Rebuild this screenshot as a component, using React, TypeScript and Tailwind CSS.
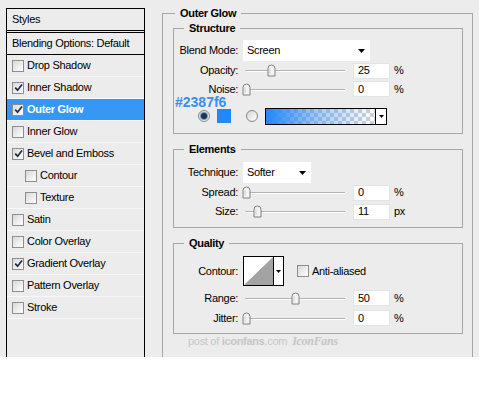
import React from "react";

const layers = [
  { label: "Drop Shadow" },
  { label: "Inner Shadow", checked: true },
  { label: "Outer Glow", checked: true, active: true },
  { label: "Inner Glow" },
  { label: "Bevel and Emboss", checked: true },
  { label: "Contour", indent: true },
  { label: "Texture", indent: true },
  { label: "Satin" },
  { label: "Color Overlay" },
  { label: "Gradient Overlay", checked: true },
  { label: "Pattern Overlay" },
  { label: "Stroke" },
];

function CheckBox({ checked }: { checked?: boolean }) {
  return (
    <span className="flex h-[12px] w-[12px] shrink-0 items-center justify-center border border-[#8e8e8e] bg-linear-to-br from-[#d9d9d9] to-white">
      {checked && (
        <svg width="9" height="9" viewBox="0 0 9 9">
          <path d="M1.2 4.6 L3.6 7.2 L8 1.4" stroke="#1d2f4a" strokeWidth="1.7" fill="none" />
        </svg>
      )}
    </span>
  );
}

function Radio({ checked }: { checked?: boolean }) {
  return (
    <span className="flex h-[12px] w-[12px] shrink-0 items-center justify-center rounded-full border border-[#858585] bg-linear-to-br from-[#d6d6d6] to-white">
      {checked && <span className="h-[6px] w-[6px] rounded-full bg-[#1c3550] shadow-[0_0_0_1px_#6f9cc8]" />}
    </span>
  );
}

function Arrow() {
  return (
    <svg width="7" height="4" viewBox="0 0 7 4">
      <path d="M0 0 H7 L3.5 4 Z" fill="#000" />
    </svg>
  );
}

function Slider({ pos }: { pos: number }) {
  return (
    <div className="relative h-full w-[102px]">
      <div className="absolute left-[2px] right-0 top-[9px] h-px bg-[#b4b4b4]" />
      <div className="absolute left-[2px] right-0 top-[10px] h-px bg-white" />
      <svg
        className="absolute top-[3px]"
        style={{ left: pos - 4 }}
        width="9"
        height="13"
        viewBox="0 0 9 13"
      >
        <path d="M1 4.5 Q1 1 4.5 1 Q8 1 8 4.5 V12 H1 Z" fill="#f3f3f3" stroke="#7f7f7f" />
        <path d="M3 4 V10" stroke="#d0d0d0" />
      </svg>
    </div>
  );
}

function SliderRow({ label, value, unit, pos, h = "h-[19px]" }: { label: string; value: string; unit: string; pos: number; h?: string }) {
  return (
    <div className={`flex items-center ${h}`}>
      <span className="w-[64px] text-right">{label}</span>
      <div className="ml-[5px] h-[19px]">
        <Slider pos={pos} />
      </div>
      <div className="ml-[8px] flex h-[16px] w-[37px] items-center border border-[#e4e4e4] bg-white pl-[4px]">{value}</div>
      <span className="ml-[4px]">{unit}</span>
    </div>
  );
}

function Select({ value, w }: { value: string; w: string }) {
  return (
    <div className={`flex h-[21px] items-center justify-between bg-white pl-[4px] pr-[5px] ${w}`}>
      <span>{value}</span>
      <Arrow />
    </div>
  );
}

export default function App() {
  return (
    <div className="h-[413px] w-[479px] bg-white font-['Liberation_Sans',Arial,sans-serif] text-[11px] leading-[13px] tracking-[-0.3px] text-black">
      <div className="flex h-[357px] overflow-hidden bg-[#ececec]">
        {/* styles list */}
        <div className="ml-[6px] mt-[8px] flex h-[360px] w-[139px] flex-col border border-b-0 border-black">
          <div className="flex h-[24px] items-center border-b-[3px] border-double border-black pl-[5px]">Styles</div>
          <div className="flex h-[22px] items-center border-b border-black pl-[5px]">Blending Options: Default</div>
          {layers.map((l) => (
            <div
              key={l.label}
              className={`flex h-[22px] items-center gap-[2px] border-b border-[#f8f8f8] ${l.indent ? "pl-[18px]" : "pl-[5px]"} ${l.active ? "bg-[#3797f4] font-bold text-white" : ""}`}
            >
              <CheckBox checked={l.checked} />
              <span className="ml-[1px]">{l.label}</span>
            </div>
          ))}
        </div>

        {/* outer glow settings */}
        <fieldset className="ml-[17px] mt-[6px] h-[400px] w-[311px] border border-[#a6a6a6]">
          <legend className="ml-[12px] px-[5px] font-bold leading-[14px]">Outer Glow</legend>

          <fieldset className="relative ml-[10px] mt-[1px] w-[290px] border border-[#a6a6a6] pb-[9px] pt-[5px]">
            <legend className="ml-[10px] px-[5px] font-bold leading-[14px]">Structure</legend>
            <div className="flex h-[21px] items-center">
              <span className="w-[64px] text-right">Blend Mode:</span>
              <div className="ml-[5px]">
                <Select value="Screen" w="w-[127px]" />
              </div>
            </div>
            <SliderRow label="Opacity:" value="25" unit="%" pos={28} />
            <SliderRow label="Noise:" value="0" unit="%" h="h-[18px]" pos={3} />
            <div className="relative mt-[10px] flex h-[16px] items-center">
              <span className="absolute -top-[11px] left-[1px] text-[14px] font-bold leading-[10px] tracking-normal text-[#3b8fe6]">#2387f6</span>
              <div className="ml-[24px]">
                <Radio checked />
              </div>
              <span className="ml-[7px] h-[14px] w-[14px] bg-[#2387f6]" />
              <div className="ml-[15px]">
                <Radio />
              </div>
              <div className="ml-[7px] flex h-[17px] w-[122px] border border-black">
                <div className="relative flex-1 bg-[repeating-conic-gradient(#d2d2d2_0%_25%,#ffffff_0%_50%)] bg-[length:8px_8px]">
                  <div className="absolute inset-0 bg-linear-to-r from-[#2387f6] via-[#2387f6]/40 to-transparent" />
                </div>
                <div className="flex w-[11px] items-center justify-center border-l border-black bg-white">
                  <svg width="5" height="3" viewBox="0 0 5 3">
                    <path d="M0 0 H5 L2.5 3 Z" fill="#000" />
                  </svg>
                </div>
              </div>
            </div>
          </fieldset>

          <fieldset className="ml-[10px] mt-[8px] w-[290px] border border-[#a6a6a6] pb-[6px] pt-[6px]">
            <legend className="ml-[10px] px-[5px] font-bold leading-[14px]">Elements</legend>
            <div className="flex h-[21px] items-center">
              <span className="w-[64px] text-right">Technique:</span>
              <div className="ml-[5px]">
                <Select value="Softer" w="w-[68px]" />
              </div>
            </div>
            <SliderRow label="Spread:" value="0" unit="%" pos={3} />
            <SliderRow label="Size:" value="11" unit="px" pos={14} />
          </fieldset>

          <fieldset className="ml-[10px] mt-[8px] w-[290px] border border-[#a6a6a6] pb-[5px] pt-[6px]">
            <legend className="ml-[10px] px-[5px] font-bold leading-[14px]">Quality</legend>
            <div className="flex h-[30px] items-center">
              <span className="w-[64px] text-right">Contour:</span>
              <div className="ml-[5px] flex h-[30px] w-[41px] border border-black bg-white">
                <svg width="29" height="28" viewBox="0 0 29 28">
                  <path d="M0 28 L29 0 V28 Z" fill="#a3a3a3" />
                </svg>
                <div className="flex flex-1 items-center justify-center border-l border-black">
                  <svg width="5" height="3" viewBox="0 0 5 3">
                    <path d="M0 0 H5 L2.5 3 Z" fill="#000" />
                  </svg>
                </div>
              </div>
              <div className="ml-[13px]">
                <CheckBox />
              </div>
              <span className="ml-[3px]">Anti-aliased</span>
            </div>
            <SliderRow label="Range:" value="50" unit="%" pos={52} h="mt-[2px] h-[20px]" />
            <SliderRow label="Jitter:" value="0" unit="%" pos={3} h="h-[20px]" />
          </fieldset>

          <div className="ml-[25px] mt-[1px] flex items-center gap-[5px] leading-[12px] text-[#c6c6c6]">
            <span>
              post of <span className="font-bold">iconfans</span>.com
            </span>
            <span className="font-['Liberation_Serif',serif] text-[12px] font-bold italic">IconFans</span>
          </div>
        </fieldset>
      </div>
    </div>
  );
}
